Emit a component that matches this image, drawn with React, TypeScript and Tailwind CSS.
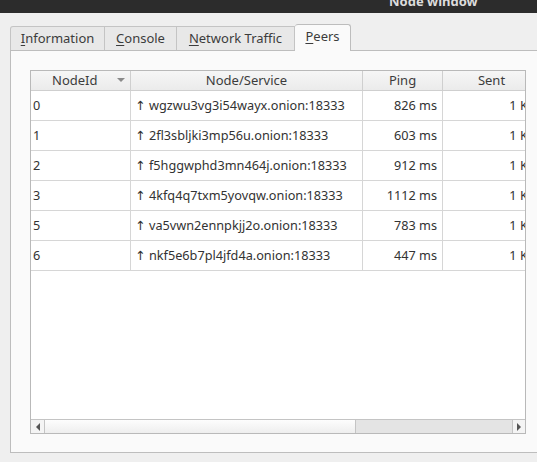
import React from 'react';

type Peer = { id: string; addr: string; ping: string; sent: string };

const peers: Peer[] = [
    { id: '0', addr: 'wgzwu3vg3i54wayx.onion:18333', ping: '826 ms', sent: '1 KB' },
    { id: '1', addr: '2fl3sbljki3mp56u.onion:18333', ping: '603 ms', sent: '1 KB' },
    { id: '2', addr: 'f5hggwphd3mn464j.onion:18333', ping: '912 ms', sent: '1 KB' },
    { id: '3', addr: '4kfq4q7txm5yovqw.onion:18333', ping: '1112 ms', sent: '1 KB' },
    { id: '5', addr: 'va5vwn2ennpkjj2o.onion:18333', ping: '783 ms', sent: '1 KB' },
    { id: '6', addr: 'nkf5e6b7pl4jfd4a.onion:18333', ping: '447 ms', sent: '1 KB' },
];

export default function App() {
    return (
        <div className="w-[537px] h-[462px] overflow-hidden bg-[#efefef] text-[13px] text-[#3c3c3c]" style={{ fontFamily: '"Noto Sans", "DejaVu Sans", sans-serif' }}>
            {/* barre de titre de la fenêtre */}
            <div className="h-[13px] bg-[#2c2c2c] overflow-hidden">
                <div className="pl-[389px] -mt-[7px] text-[13px] leading-[16px] font-bold text-[#dcdcdc] whitespace-nowrap">Node window</div>
            </div>

            {/* onglets */}
            <div className="flex items-end pl-[10px] mt-[11px]">
                <div className="h-[24px] w-[95px] flex items-center justify-center bg-[#e8e8e8] border border-b-0 border-[#c4c4c4] rounded-tl-[3px]">
                    <span><span className="underline underline-offset-2">I</span>nformation</span>
                </div>
                <div className="h-[24px] w-[72px] flex items-center justify-center bg-[#e8e8e8] border border-b-0 border-l-0 border-[#c4c4c4]">
                    <span><span className="underline underline-offset-2">C</span>onsole</span>
                </div>
                <div className="h-[24px] w-[118px] flex items-center justify-center bg-[#e8e8e8] border border-b-0 border-l-0 border-[#c4c4c4]">
                    <span><span className="underline underline-offset-2">N</span>etwork Traffic</span>
                </div>
                <div className="h-[27px] w-[56px] -mb-px relative z-10 flex items-center justify-center pb-[2px] bg-[#fafafa] border border-b-0 border-l-0 border-[#bdbdbd] rounded-t-[3px]">
                    <span><span className="underline underline-offset-2">P</span>eers</span>
                </div>
            </div>

            {/* panneau */}
            <div className="ml-[10px] h-[403px] bg-[#fafafa] border border-r-0 border-[#bdbdbd] pt-[19px] pl-[19px]">
                <div className="w-[496px] h-[364px] border border-[#b9b9b9] bg-white flex flex-col">
                    <div className="h-[348px] overflow-hidden">
                        <div className="w-[516px]">
                            {/* en-tête */}
                            <div className="flex h-[20px] border-b border-[#cfcfcf] bg-gradient-to-b from-[#f6f6f6] to-[#ebebeb]">
                                <div className="w-[100px] shrink-0 border-r border-[#cfcfcf] flex items-center relative">
                                    <span className="pl-[21px]">NodeId</span>
                                    <svg className="absolute left-[86px] top-[7px]" width="8" height="5" viewBox="0 0 8 5">
                                        <path d="M0 0 H8 L4 4 Z" fill="#8a8a8a" />
                                    </svg>
                                </div>
                                <div className="w-[232px] shrink-0 border-r border-[#cfcfcf] flex items-center justify-center">Node/Service</div>
                                <div className="w-[80px] shrink-0 border-r border-[#cfcfcf] flex items-center justify-center">Ping</div>
                                <div className="w-[98px] shrink-0 border-r border-[#cfcfcf] flex items-center justify-center">Sent</div>
                            </div>
                            {peers.map((p) => (
                                <div key={p.id} className="flex h-[30px] border-b border-[#d6d6d6] text-[#333] text-[12.7px]">
                                    <div className="w-[100px] shrink-0 border-r border-[#d6d6d6] flex items-center pl-[2px]">{p.id}</div>
                                    <div className="w-[232px] shrink-0 border-r border-[#d6d6d6] flex items-center pl-[4px] whitespace-nowrap">↑ {p.addr}</div>
                                    <div className="w-[80px] shrink-0 border-r border-[#d6d6d6] flex items-center justify-end pr-[5px]">{p.ping}</div>
                                    <div className="w-[98px] shrink-0 border-r border-[#d6d6d6] flex items-center justify-end pr-[4px] whitespace-nowrap">{p.sent}</div>
                                </div>
                            ))}
                        </div>
                    </div>
                    {/* barre de défilement horizontale */}
                    <div className="h-[14px] border-t border-[#c4c4c4] flex">
                        <div className="w-[14px] shrink-0 border-r border-[#c4c4c4] bg-[#f4f4f4] flex items-center justify-center">
                            <svg width="4" height="8" viewBox="0 0 4 8"><path d="M4 0 V8 L0 4 Z" fill="#555" /></svg>
                        </div>
                        <div className="w-[311px] shrink-0 border-r border-[#c4c4c4] bg-gradient-to-b from-[#fdfdfd] to-[#eeeeee]" />
                        <div className="flex-1 bg-[#e4e4e4] border-r border-[#c4c4c4]" />
                        <div className="w-[12px] shrink-0 bg-[#f4f4f4] flex items-center justify-center">
                            <svg width="4" height="8" viewBox="0 0 4 8"><path d="M0 0 V8 L4 4 Z" fill="#555" /></svg>
                        </div>
                    </div>
                </div>
            </div>
        </div>
    );
}
